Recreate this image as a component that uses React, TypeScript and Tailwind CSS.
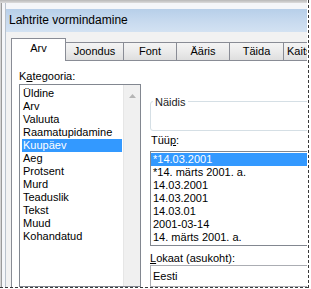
import React from "react";

const cats = [
  "Üldine",
  "Arv",
  "Valuuta",
  "Raamatupidamine",
  "Kuupäev",
  "Aeg",
  "Protsent",
  "Murd",
  "Teaduslik",
  "Tekst",
  "Muud",
  "Kohandatud",
];

const types = [
  "*14.03.2001",
  "*14. märts 2001. a.",
  "14.03.2001",
  "14.03.2001",
  "14.03.01",
  "2001-03-14",
  "14. märts 2001. a.",
];

const tabs = [
  { label: "Joondus", w: "w-[58px] justify-center" },
  { label: "Font", w: "w-[53px] justify-center" },
  { label: "Ääris", w: "w-[53px] justify-center" },
  { label: "Täida", w: "w-[54px] justify-center" },
  { label: "Kaitse", w: "w-[50px] pl-[3px]" },
];

export default function App() {
  return (
    <div className="w-[311px] h-[289px] bg-white font-['Liberation_Sans',Arial,sans-serif] text-[11px] leading-[13px] text-black">
      <div className="flex">
        <div className="flex flex-col">
          {/* captured region */}
          <div className="w-[307px] h-[287px] overflow-hidden flex flex-col bg-[#f0f0f0]">
            <div className="h-[3px] shrink-0 bg-[linear-gradient(to_bottom,#b8b8b8,#dcdcdc)]" />
            <div className="flex flex-1 min-h-0">
              {/* left window frame */}
              <div className="w-[6px] shrink-0 flex">
                <div className="w-[1px] bg-[#d4d4d4]" />
                <div className="w-[1px] bg-[#9a9a9a]" />
                <div className="w-[3px] bg-[#f4f6f9]" />
                <div className="w-[1px] bg-[#b9c2cc]" />
              </div>
              <div className="flex-1 flex flex-col min-w-0">
                <div className="h-[6px] shrink-0 bg-[#f4f6f9]" />
                {/* title bar */}
                <div className="h-[23px] shrink-0 flex items-center pl-[3px] text-[12px] bg-[linear-gradient(to_bottom,#b7cfe9,#c9dbef_60%,#d3e2f2)]">
                  <span className="whitespace-nowrap">Lahtrite vormindamine</span>
                </div>
                {/* client */}
                <div className="flex-1 flex flex-col bg-[#f2f2f2] pl-[5px] min-h-0">
                  <div className="h-[6px] shrink-0" />
                  {/* tab row */}
                  <div className="h-[22px] shrink-0 flex items-end whitespace-nowrap">
                    <div className="relative z-10 w-[55px] h-[23px] -mb-[1px] shrink-0 bg-white border-l border-t border-r border-[#898c95] flex items-center justify-center pb-[3px]">
                      Arv
                    </div>
                    {tabs.map((t) => (
                      <div
                        key={t.label}
                        className={`${t.w} h-[18px] shrink-0 border-t border-r border-[#898c95] bg-[linear-gradient(to_bottom,#f4f4f4,#ebebeb_50%,#dedede)] flex items-center`}
                      >
                        {t.label}
                      </div>
                    ))}
                  </div>
                  {/* tab panel */}
                  <div className="flex-1 bg-white border-t border-l border-[#898c95] flex pl-[7px] pt-[9px] min-h-0">
                    {/* left column */}
                    <div className="w-[122px] shrink-0 flex flex-col">
                      <div className="h-[13px]">
                        K<span className="underline">a</span>tegooria:
                      </div>
                      <div className="mt-[1px] h-[220px] border border-[#828790] flex pt-[2px]">
                        <div className="w-[103px] shrink-0 flex flex-col pl-[2px] pr-[1px]">
                          {cats.map((c) => (
                            <div
                              key={c}
                              className={`h-[13px] pl-[1px] whitespace-nowrap ${
                                c === "Kuupäev" ? "bg-[#3399ff] text-white" : ""
                              }`}
                            >
                              {c}
                            </div>
                          ))}
                        </div>
                        <div className="w-[17px] shrink-0 -mt-[2px] bg-[#f0f0f0] border-l border-[#e6e6e6] flex justify-center pt-[9px]">
                          <svg width="7" height="4" viewBox="0 0 7 4">
                            <path d="M0 4 L3.5 0 L7 4 Z" fill="#b5b5b5" />
                          </svg>
                        </div>
                      </div>
                    </div>
                    {/* right column */}
                    <div className="ml-[9px] w-[200px] shrink-0 flex flex-col">
                      <div className="relative mt-[31px] h-[31px] border border-[#d5dfe5] rounded-[3px]">
                        <div className="absolute left-[2px] top-[-6px] px-[2px] bg-white text-[#222] leading-[13px]">
                          Näidis
                        </div>
                      </div>
                      <div className="mt-[3px] h-[13px] pl-[1px]">
                        Tüü<span className="underline">p</span>:
                      </div>
                      <div className="mt-[4px] h-[95px] border border-[#828790] pt-[1px] pb-[1px]">
                        {types.map((t, i) => (
                          <div
                            key={i}
                            className={`h-[13px] pl-[2px] whitespace-nowrap ${
                              i === 0 ? "bg-[#3399ff] text-white" : ""
                            }`}
                          >
                            {t}
                          </div>
                        ))}
                      </div>
                      <div className="mt-[6px] h-[13px]">
                        <span className="underline">L</span>okaat (asukoht):
                      </div>
                      <div className="h-[22px] border border-[#abadb3] flex items-center pl-[2px]">
                        Eesti
                      </div>
                    </div>
                  </div>
                </div>
              </div>
            </div>
          </div>
          <div className="w-[308px] h-[1px] bg-[repeating-linear-gradient(to_right,#3a3a3a_0_3px,transparent_3px_5px)]" />
        </div>
        <div className="w-[1px] h-[288px] bg-[repeating-linear-gradient(to_bottom,#3a3a3a_0_3px,transparent_3px_5px)]" />
      </div>
    </div>
  );
}
